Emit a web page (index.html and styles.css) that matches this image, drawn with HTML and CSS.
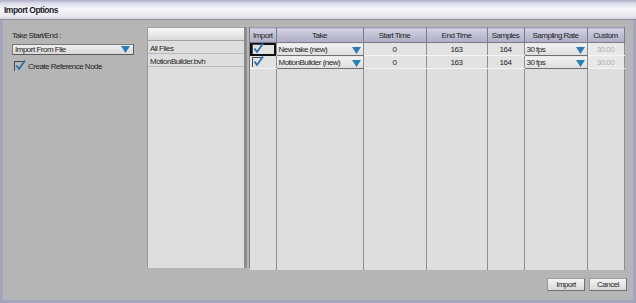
FILE: index.html
```html
<!DOCTYPE html>
<html lang="en">
<head>
  <meta charset="UTF-8">
  <title>Import Options</title>
  <link rel="stylesheet" href="styles.css">
</head>
<body>
  <div class="window">
    <div class="titlebar">Import Options</div>
    <div class="frame">
      <div class="content">
        <div class="left-panel">
          <div class="caption">Take Start/End :</div>
          <div class="combo">
            <span>Import From File</span>
            <svg class="arrow" width="9" height="7" viewBox="0 0 9 7"><polygon points="0,0 9,0 4.5,7" fill="#2b7db9"/></svg>
          </div>
          <label class="check-row">
            <span class="checkbox"><svg width="11" height="11" viewBox="0 0 11 11"><path d="M1.5 5.5 L4 9 L10 0.5" stroke="#2b6fb5" stroke-width="1.8" fill="none"/></svg></span>
            Create Reference Node
          </label>
        </div>

        <div class="files">
          <div class="files-head"></div>
          <div class="file-row">All Files</div>
          <div class="file-row">MotionBuilder.bvh</div>
        </div>

        <div class="splitter"><span></span><span></span></div>

        <div class="takes">
          <table>
            <colgroup>
              <col style="width:26px"><col style="width:87px"><col style="width:63px"><col style="width:61px">
              <col style="width:37px"><col style="width:63px"><col style="width:37px">
            </colgroup>
            <thead>
              <tr>
                <th>Import</th><th>Take</th><th>Start Time</th><th>End Time</th><th>Samples</th><th>Sampling Rate</th><th>Custom</th>
              </tr>
            </thead>
            <tbody>
              <tr>
                <td class="import focus"><span class="checkbox"><svg width="11" height="11" viewBox="0 0 11 11"><path d="M1.5 5.5 L4 9 L10 0.5" stroke="#2b6fb5" stroke-width="1.8" fill="none"/></svg></span></td>
                <td class="drop"><span>New take (new)</span><svg class="arrow" width="9" height="7" viewBox="0 0 9 7"><polygon points="0,0 9,0 4.5,7" fill="#2b7db9"/></svg></td>
                <td>0</td><td>163</td><td>164</td>
                <td class="drop"><span>30 fps</span><svg class="arrow" width="9" height="7" viewBox="0 0 9 7"><polygon points="0,0 9,0 4.5,7" fill="#2b7db9"/></svg></td>
                <td class="custom">30.00</td>
              </tr>
              <tr>
                <td class="import"><span class="checkbox"><svg width="11" height="11" viewBox="0 0 11 11"><path d="M1.5 5.5 L4 9 L10 0.5" stroke="#2b6fb5" stroke-width="1.8" fill="none"/></svg></span></td>
                <td class="drop"><span>MotionBuilder (new)</span><svg class="arrow" width="9" height="7" viewBox="0 0 9 7"><polygon points="0,0 9,0 4.5,7" fill="#2b7db9"/></svg></td>
                <td>0</td><td>163</td><td>164</td>
                <td class="drop"><span>30 fps</span><svg class="arrow" width="9" height="7" viewBox="0 0 9 7"><polygon points="0,0 9,0 4.5,7" fill="#2b7db9"/></svg></td>
                <td class="custom">30.00</td>
              </tr>
              <tr class="filler">
                <td></td><td></td><td></td><td></td><td></td><td></td><td></td>
              </tr>
            </tbody>
          </table>
        </div>
      </div>

      <div class="buttons">
        <button class="btn">Import</button>
        <button class="btn">Cancel</button>
      </div>
    </div>
  </div>
</body>
</html>
```

FILE: styles.css
```css
body {
  margin: 0;
  background-color: #b5b5b5;
  font-family: "Liberation Sans", Arial, sans-serif;
  font-size: 8px;
  letter-spacing: -0.5px;
  color: #1e1e1e;
}
.window {
  width: 636px;
  height: 303px;
  display: flex;
  flex-direction: column;
  background-color: #b5b5b5;
}
.titlebar {
  height: 20px;
  box-sizing: border-box;
  padding: 5px 0 0 4px;
  font-weight: bold;
  font-size: 8.5px;
  letter-spacing: -0.5px;
  color: #1a1a2a;
  background: linear-gradient(#a9a9c6 0px, #d9d9e8 3px, #f7f7fb 9px, #e6e6ee 17px, #c4c4d0 20px);
  border-radius: 4px 4px 0 0;
  border-bottom: 1px solid #8d8d9f;
}
.frame {
  flex: 1;
  display: flex;
  flex-direction: column;
  border-left: 3px solid #a4a4bc;
  border-right: 3px solid #a4a4bc;
  border-bottom: 3px solid #a4a4bc;
}
.content {
  display: flex;
  height: 241px;
  padding: 7px 0 0 9px;
}
.left-panel {
  width: 135px;
  flex: none;
}
.caption {
  margin-top: 4px;
  height: 13px;
}
.combo {
  width: 122px;
  height: 11px;
  box-sizing: border-box;
  padding: 0 3px 0 2px;
  display: flex;
  align-items: center;
  justify-content: space-between;
  background: linear-gradient(#f0f0f0, #d8d8d8);
  border: 1px solid #7a7a7a;
  border-right-color: #5a5a5a;
  border-bottom-color: #5a5a5a;
}
.check-row {
  display: flex;
  align-items: center;
  gap: 4px;
  margin: 6px 0 0 2px;
}
.checkbox {
  width: 10px;
  height: 10px;
  display: inline-block;
  position: relative;
  box-sizing: border-box;
  border-top: 1px solid #4a4a4a;
  border-left: 1px solid #4a4a4a;
}
.checkbox svg {
  position: absolute;
  left: 0;
  top: -2px;
}
.files {
  width: 98px;
  flex: none;
  box-sizing: border-box;
  background-color: #dedede;
  border-left: 1px solid #9a9a9a;
  border-right: 1px solid #8a8a8a;
}
.files-head {
  height: 14px;
  box-sizing: border-box;
  background: linear-gradient(#f7f7f7, #dadada);
  border: 1px solid #a0a0a0;
  border-left: none;
  border-right: none;
}
.file-row {
  height: 13px;
  box-sizing: border-box;
  padding: 3px 0 0 2px;
  border-bottom: 1px solid #b8b8b8;
}
.splitter {
  width: 5px;
  flex: none;
  display: flex;
  gap: 2px;
}
.splitter span {
  width: 2px;
  background-color: #8e8e8e;
}
.splitter span + span {
  width: 1px;
  background-color: #7e7e7e;
}
.takes {
  width: 374px;
  flex: none;
  box-sizing: border-box;
  border-right: 2px solid #8a8a8a;
  background-color: #dedede;
}
table {
  border-collapse: collapse;
  table-layout: fixed;
  width: 372px;
  height: 241px;
}
th {
  height: 14px;
  padding: 0;
  font-weight: normal;
  background: linear-gradient(#d2d2e2, #acacc4);
  border-right: 1px solid #7b7b8f;
  border-bottom: 1px solid #7b7b8f;
  border-top: 1px solid #9a9aac;
}
td {
  height: 13px;
  padding: 0 2px;
  text-align: center;
  background-color: #e2e2e2;
  border-right: 1px solid #8e8e8e;
  border-bottom: 1px solid #f5f5f5;
  white-space: nowrap;
  overflow: hidden;
  box-sizing: border-box;
}
td.import {
  padding: 0 0 0 2px;
  text-align: left;
}
td.import .checkbox {
  vertical-align: middle;
}
td.focus {
  outline: 2px solid #111;
  outline-offset: -2px;
}
td.drop {
  text-align: left;
  background: linear-gradient(#f2f2f2, #dedede);
  border-bottom: 1px solid #6f6f6f;
}
td.drop .arrow {
  float: right;
  margin-top: 2px;
}
td.custom {
  color: #b0b0b0;
  background-color: #e8e8e8;
}
.filler td {
  height: 201px;
  border-bottom: none;
  background-color: #dedede;
}
.buttons {
  display: flex;
  justify-content: flex-end;
  gap: 4px;
  padding: 10px 6px 0 0;
}
.btn {
  width: 38px;
  height: 13px;
  padding: 0;
  font-family: inherit;
  font-size: 8px;
  letter-spacing: -0.5px;
  color: #1e1e1e;
  background: linear-gradient(#f4f4f4, #d8d8d8);
  border: 1px solid #707070;
  border-top-color: #9a9a9a;
  border-left-color: #9a9a9a;
}
```
